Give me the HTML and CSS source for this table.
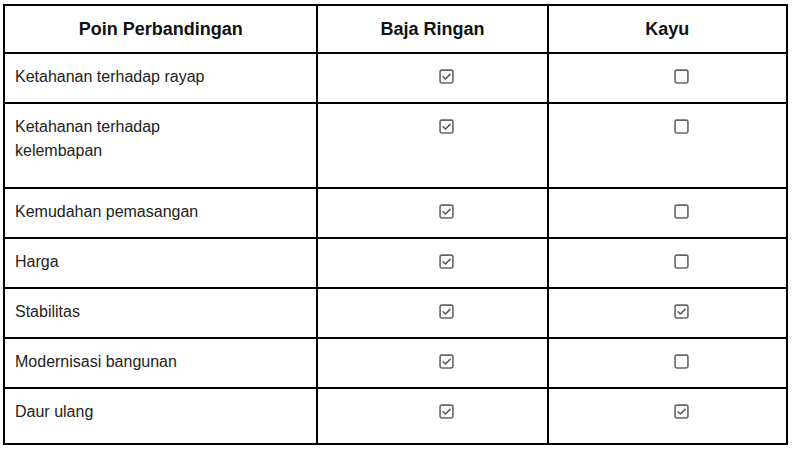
FILE: index.html
```html
<!DOCTYPE html>
<html lang="id">
<head>
<meta charset="utf-8">
<title>Perbandingan Baja Ringan dan Kayu</title>
<link rel="stylesheet" href="styles.css">
</head>
<body>
<table class="compare">
  <colgroup>
    <col class="c1"><col class="c2"><col class="c3">
  </colgroup>
  <thead>
    <tr><th>Poin Perbandingan</th><th>Baja Ringan</th><th>Kayu</th></tr>
  </thead>
  <tbody>
    <tr><td>Ketahanan terhadap rayap</td>
      <td class="mark"><svg class="cb" viewBox="0 0 14 14"><rect x="1" y="1" width="12" height="12" rx="1.5"/><path d="M3.8 7.2l2.2 2.2 4.3-4.4"/></svg></td>
      <td class="mark"><svg class="cb" viewBox="0 0 14 14"><rect x="1" y="1" width="12" height="12" rx="1.5"/></svg></td></tr>
    <tr class="tall"><td>Ketahanan terhadap<br>kelembapan</td>
      <td class="mark"><svg class="cb" viewBox="0 0 14 14"><rect x="1" y="1" width="12" height="12" rx="1.5"/><path d="M3.8 7.2l2.2 2.2 4.3-4.4"/></svg></td>
      <td class="mark"><svg class="cb" viewBox="0 0 14 14"><rect x="1" y="1" width="12" height="12" rx="1.5"/></svg></td></tr>
    <tr><td>Kemudahan pemasangan</td>
      <td class="mark"><svg class="cb" viewBox="0 0 14 14"><rect x="1" y="1" width="12" height="12" rx="1.5"/><path d="M3.8 7.2l2.2 2.2 4.3-4.4"/></svg></td>
      <td class="mark"><svg class="cb" viewBox="0 0 14 14"><rect x="1" y="1" width="12" height="12" rx="1.5"/></svg></td></tr>
    <tr><td>Harga</td>
      <td class="mark"><svg class="cb" viewBox="0 0 14 14"><rect x="1" y="1" width="12" height="12" rx="1.5"/><path d="M3.8 7.2l2.2 2.2 4.3-4.4"/></svg></td>
      <td class="mark"><svg class="cb" viewBox="0 0 14 14"><rect x="1" y="1" width="12" height="12" rx="1.5"/></svg></td></tr>
    <tr><td>Stabilitas</td>
      <td class="mark"><svg class="cb" viewBox="0 0 14 14"><rect x="1" y="1" width="12" height="12" rx="1.5"/><path d="M3.8 7.2l2.2 2.2 4.3-4.4"/></svg></td>
      <td class="mark"><svg class="cb" viewBox="0 0 14 14"><rect x="1" y="1" width="12" height="12" rx="1.5"/><path d="M3.8 7.2l2.2 2.2 4.3-4.4"/></svg></td></tr>
    <tr><td>Modernisasi bangunan</td>
      <td class="mark"><svg class="cb" viewBox="0 0 14 14"><rect x="1" y="1" width="12" height="12" rx="1.5"/><path d="M3.8 7.2l2.2 2.2 4.3-4.4"/></svg></td>
      <td class="mark"><svg class="cb" viewBox="0 0 14 14"><rect x="1" y="1" width="12" height="12" rx="1.5"/></svg></td></tr>
    <tr class="last"><td>Daur ulang</td>
      <td class="mark"><svg class="cb" viewBox="0 0 14 14"><rect x="1" y="1" width="12" height="12" rx="1.5"/><path d="M3.8 7.2l2.2 2.2 4.3-4.4"/></svg></td>
      <td class="mark"><svg class="cb" viewBox="0 0 14 14"><rect x="1" y="1" width="12" height="12" rx="1.5"/><path d="M3.8 7.2l2.2 2.2 4.3-4.4"/></svg></td></tr>
  </tbody>
</table>
</body>
</html>
```

FILE: styles.css
```css
html, body {
  margin: 0;
  padding: 0;
  background: #fff;
}
body {
  padding: 4px 0 0 3px;
  font-family: "Liberation Sans", Arial, sans-serif;
  font-size: 16px;
  color: #222;
}
.compare {
  border-collapse: collapse;
  width: 785px;
  border: 2px solid #000;
}
.c1 { width: 314px; }
.c2 { width: 231px; }
.c3 { width: 240px; }
.compare th,
.compare td {
  border: 2px solid #000;
  padding: 11px 10px 13px;
  line-height: 24px;
}
.compare th {
  font-size: 18px;
  font-weight: bold;
  color: #111;
  text-align: center;
  padding: 11px 10px;
}
.compare .tall td {
  padding-bottom: 24px;
}
.compare .last td {
  padding-bottom: 19px;
}
.compare td.mark {
  text-align: center;
  padding-left: 38px;
  vertical-align: top;
}
.cb {
  width: 15px;
  height: 15px;
  display: inline-block;
  vertical-align: -2px;
}
.cb rect {
  fill: #fff;
  stroke: #666;
  stroke-width: 1.5;
}
.cb path {
  fill: none;
  stroke: #555;
  stroke-width: 1.4;
  stroke-linecap: round;
  stroke-linejoin: round;
}
```
